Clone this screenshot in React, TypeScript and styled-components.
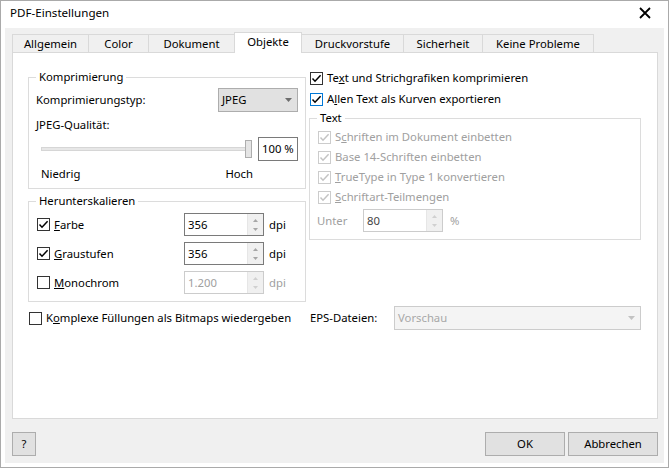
import React from 'react';
import styled, { createGlobalStyle } from 'styled-components';

const FONT = `"Noto Sans", "Open Sans", sans-serif`;

const GlobalStyle = createGlobalStyle`
  html, body { margin: 0; padding: 0; background: #fff; }
  body { font-family: ${FONT}; font-size: 11.3px; line-height: 16px; color: #000; }
  * { box-sizing: border-box; }
`;

const Window = styled.div`
  width: 669px;
  height: 468px;
  border: 1px solid #aaaaaa;
  background: #fff;
  display: flex;
  flex-direction: column;
`;

const TitleBar = styled.div`
  flex: none;
  height: 27px;
  display: flex;
  align-items: center;
  justify-content: space-between;
  padding: 0 17px 3px 9px;
  font-size: 11.6px;
`;

const Client = styled.div`
  flex: 1;
  margin: 0 4px 4px;
  background: #f0f0f0;
  padding: 4px 6px 7px 7px;
  display: flex;
  flex-direction: column;
`;

const TabRow = styled.div`
  flex: none;
  height: 21px;
  display: flex;
  align-items: flex-end;
  position: relative;
  z-index: 1;
`;

const Tab = styled.div<{ $active?: boolean; $w: number; $first?: boolean }>`
  width: ${(p) => p.$w + (p.$active ? 1 : 0)}px;
  height: ${(p) => (p.$active ? 21 : 18)}px;
  margin-bottom: ${(p) => (p.$active ? 0 : 1)}px;
  margin-left: ${(p) => (p.$active ? -1 : 0)}px;
  border-top: 1px solid #d9d9d9;
  border-right: 1px solid #d9d9d9;
  border-left: ${(p) => (p.$active || p.$first ? '1px solid #d9d9d9' : 'none')};
  background: ${(p) => (p.$active ? '#fff' : '#f0f0f0')};
  display: flex;
  align-items: center;
  justify-content: center;
  padding-bottom: ${(p) => (p.$active ? 2 : 0)}px;
  white-space: nowrap;
`;

const Panel = styled.div`
  flex: 1;
  margin-top: -1px;
  background: #fff;
  border: 1px solid #d9d9d9;
  padding: 16px 0 0 15px;
`;

const Columns = styled.div`
  display: grid;
  grid-template-columns: 278px 332px;
  column-gap: 3px;
`;

const Column = styled.div`
  display: flex;
  flex-direction: column;
`;

const Group = styled.fieldset<{ $top?: number; $pt: number; $pb: number }>`
  margin: ${(p) => p.$top ?? 0}px 0 0 0;
  min-width: 0;
  border: 1px solid #dcdcdc;
  padding: ${(p) => p.$pt}px 7px ${(p) => p.$pb}px 7px;
  display: flex;
  flex-direction: column;
`;

const Legend = styled.legend`
  padding: 0 3px;
  line-height: 16px;
`;

const Row = styled.div<{ $top?: number; $h?: number }>`
  display: flex;
  align-items: center;
  height: ${(p) => p.$h ?? 16}px;
  margin-top: ${(p) => p.$top ?? 0}px;
`;

const SpreadRow = styled(Row)`
  justify-content: space-between;
`;

const Label = styled.span<{ $dim?: boolean }>`
  color: ${(p) => (p.$dim ? '#a0a0a0' : '#000')};
  white-space: nowrap;
`;

const DropDown = styled.div<{ $w?: number; $disabled?: boolean }>`
  width: ${(p) => (p.$w ? `${p.$w}px` : 'auto')};
  flex: ${(p) => (p.$w ? 'none' : '1')};
  height: 24px;
  border: 1px solid ${(p) => (p.$disabled ? '#cccccc' : '#adadad')};
  background: ${(p) => (p.$disabled ? '#f4f4f4' : '#e1e1e1')};
  color: ${(p) => (p.$disabled ? '#a8a8a8' : '#000')};
  display: flex;
  align-items: center;
  justify-content: space-between;
  padding: 0 5px 0 3px;
`;

const SliderArea = styled.div`
  margin-left: 5px;
  display: flex;
  align-items: center;
`;

const Track = styled.div`
  width: 206px;
  height: 4px;
  border: 1px solid #d6d6d6;
  background: #e7e7e7;
`;

const Thumb = styled.div`
  width: 7px;
  height: 18px;
  margin-left: -2px;
  border: 1px solid #adadad;
  background: #e5e5e5;
`;

const TextBox = styled.div`
  margin-left: auto;
  width: 40px;
  height: 24px;
  border: 1px solid #7a7a7a;
  display: flex;
  align-items: center;
  padding-left: 3px;
`;

const ScaleLabels = styled(SpreadRow)`
  width: 212px;
  margin-left: 5px;
`;

const FieldRow = styled.div<{ $top?: number; $cols?: string }>`
  display: grid;
  grid-template-columns: ${(p) => p.$cols ?? '148px 80px auto'};
  align-items: center;
  height: 23px;
  margin-top: ${(p) => p.$top ?? 0}px;
`;

const UnitLabel = styled(Label)<{ $gap?: number }>`
  margin-left: ${(p) => p.$gap ?? 5}px;
`;

const SpinFrame = styled.div<{ $disabled?: boolean }>`
  width: 80px;
  height: 23px;
  border: 1px solid ${(p) => (p.$disabled ? '#cccccc' : '#7a7a7a')};
  background: #fff;
  display: flex;
`;

const SpinValue = styled.div<{ $color: string }>`
  flex: 1;
  display: flex;
  align-items: center;
  padding-left: 3px;
  color: ${(p) => p.$color};
`;

const SpinButtons = styled.div`
  width: 16px;
  border-left: 1px solid #e6e6e6;
  background: #f0f0f0;
  display: flex;
  flex-direction: column;
  align-items: center;
  justify-content: space-between;
  padding: 5px 0 4px;
`;

const CheckLine = styled.label<{ $h?: number; $top?: number }>`
  display: flex;
  align-items: center;
  height: ${(p) => p.$h ?? 18}px;
  margin-top: ${(p) => p.$top ?? 0}px;
  gap: 4px;
`;

const Box = styled.span<{ $state: 'on' | 'focus' | 'off' }>`
  flex: none;
  width: 13px;
  height: 13px;
  margin-left: 1px;
  border: 1px solid
    ${(p) => (p.$state === 'focus' ? '#0078d7' : p.$state === 'off' ? '#cccccc' : '#333333')};
  background: #fff;
  display: flex;
  align-items: center;
  justify-content: center;
`;

const BottomRow = styled.div`
  display: grid;
  grid-template-columns: 278px 332px;
  column-gap: 3px;
  height: 24px;
  margin-top: 4px;
  align-items: center;
`;

const EpsCell = styled.div`
  display: flex;
  align-items: center;
  height: 24px;
`;

const EpsLabel = styled.span`
  width: 85px;
  padding-left: 1px;
  white-space: nowrap;
`;

const ButtonRow = styled.div`
  flex: none;
  margin-top: 13px;
  display: flex;
  gap: 3px;
`;

const Button = styled.div<{ $w: number; $push?: boolean }>`
  width: ${(p) => p.$w}px;
  height: 24px;
  margin-left: ${(p) => (p.$push ? 'auto' : '0')};
  border: 1px solid #adadad;
  background: #e1e1e1;
  display: flex;
  align-items: center;
  justify-content: center;
`;

const Caret = ({ color }: { color: string }) => (
  <svg width="7" height="4" viewBox="0 0 7 4">
    <path d="M0 0h7L3.5 4z" fill={color} />
  </svg>
);

const SpinArrow = ({ up, color }: { up?: boolean; color: string }) => (
  <svg width="5" height="3" viewBox="0 0 5 3">
    <path d={up ? 'M0 3h5L2.5 0z' : 'M0 0h5L2.5 3z'} fill={color} />
  </svg>
);

const SpinBox = ({
  value,
  disabled,
  color,
}: {
  value: string;
  disabled?: boolean;
  color?: string;
}) => (
  <SpinFrame $disabled={disabled}>
    <SpinValue $color={color ?? (disabled ? '#a0a0a0' : '#000')}>{value}</SpinValue>
    <SpinButtons>
      <SpinArrow up color={disabled ? '#d0d0d0' : '#a6a6a6'} />
      <SpinArrow color={disabled ? '#d0d0d0' : '#a6a6a6'} />
    </SpinButtons>
  </SpinFrame>
);

const Check = ({
  state,
  checked = true,
  children,
  h,
  top,
}: {
  state: 'on' | 'focus' | 'off';
  checked?: boolean;
  children: React.ReactNode;
  h?: number;
  top?: number;
}) => (
  <CheckLine $h={h} $top={top}>
    <Box $state={state}>
      {checked && (
        <svg width="11" height="11" viewBox="0 0 11 11">
          <polyline
            points="1.5,5.6 4,8.2 9.6,2.2"
            fill="none"
            stroke={state === 'off' ? '#c4c4c4' : '#000'}
            strokeWidth="1.5"
          />
        </svg>
      )}
    </Box>
    <Label $dim={state === 'off'}>{children}</Label>
  </CheckLine>
);

const tabs = [
  { name: 'Allgemein', w: 77 },
  { name: 'Color', w: 60 },
  { name: 'Dokument', w: 86 },
  { name: 'Objekte', w: 67 },
  { name: 'Druckvorstufe', w: 102 },
  { name: 'Sicherheit', w: 79 },
  { name: 'Keine Probleme', w: 111 },
];

export default function App() {
  return (
    <>
      <GlobalStyle />
      <Window>
        <TitleBar>
          <span>PDF-Einstellungen</span>
          <svg width="12" height="12" viewBox="0 0 12 12">
            <path d="M1 1L11 11M11 1L1 11" stroke="#000" strokeWidth="1.8" />
          </svg>
        </TitleBar>
        <Client>
          <TabRow>
            {tabs.map((t, i) => (
              <Tab key={t.name} $w={t.w} $first={i === 0} $active={t.name === 'Objekte'}>
                {t.name}
              </Tab>
            ))}
          </TabRow>
          <Panel>
            <Columns>
              <Column>
                <Group $pt={3} $pb={6}>
                  <Legend>Komprimierung</Legend>
                  <SpreadRow $h={24}>
                    <Label>Komprimierungstyp:</Label>
                    <DropDown $w={80}>
                      <span>JPEG</span>
                      <Caret color="#6d6d6d" />
                    </DropDown>
                  </SpreadRow>
                  <Row $top={5}>
                    <Label>JPEG-Qualität:</Label>
                  </Row>
                  <Row $top={4} $h={24}>
                    <SliderArea>
                      <Track />
                      <Thumb />
                    </SliderArea>
                    <TextBox>100 %</TextBox>
                  </Row>
                  <ScaleLabels $top={5}>
                    <Label>Niedrig</Label>
                    <Label>Hoch</Label>
                  </ScaleLabels>
                </Group>
                <Group $top={4} $pt={4} $pb={7}>
                  <Legend>Herunterskalieren</Legend>
                  <FieldRow>
                    <Check state="on" h={23}>
                      <u>F</u>arbe
                    </Check>
                    <SpinBox value="356" />
                    <UnitLabel>dpi</UnitLabel>
                  </FieldRow>
                  <FieldRow $top={6}>
                    <Check state="on" h={23}>
                      <u>G</u>raustufen
                    </Check>
                    <SpinBox value="356" />
                    <UnitLabel>dpi</UnitLabel>
                  </FieldRow>
                  <FieldRow $top={6}>
                    <Check state="on" checked={false} h={23}>
                      <u>M</u>onochrom
                    </Check>
                    <SpinBox value="1.200" disabled />
                    <UnitLabel $dim>dpi</UnitLabel>
                  </FieldRow>
                </Group>
              </Column>
              <Column>
                <Check state="on">
                  Te<u>x</u>t und Strichgrafiken komprimieren
                </Check>
                <Check state="focus" top={3}>
                  A<u>l</u>len Text als Kurven exportieren
                </Check>
                <Group $top={2} $pt={1} $pb={7}>
                  <Legend>Text</Legend>
                  <Check state="off" h={20}>
                    S<u>c</u>hriften im Dokument einbetten
                  </Check>
                  <Check state="off" h={20}>
                    Base 14-Schriften einbetten
                  </Check>
                  <Check state="off" h={20}>
                    <u>T</u>rueType in Type 1 konvertieren
                  </Check>
                  <Check state="off" h={20}>
                    <u>S</u>chriftart-Teilmengen
                  </Check>
                  <FieldRow $top={2} $cols="46px 80px auto">
                    <Label $dim>Unter</Label>
                    <SpinBox value="80" disabled color="#444" />
                    <UnitLabel $dim $gap={7}>
                      %
                    </UnitLabel>
                  </FieldRow>
                </Group>
              </Column>
            </Columns>
            <BottomRow>
              <Check state="on" checked={false} h={24}>
                K<u>o</u>mplexe Füllungen als Bitmaps wiedergeben
              </Check>
              <EpsCell>
                <EpsLabel>EPS-Dateien:</EpsLabel>
                <DropDown $disabled>
                  <span>Vorschau</span>
                  <Caret color="#c2c2c2" />
                </DropDown>
              </EpsCell>
            </BottomRow>
          </Panel>
          <ButtonRow>
            <Button $w={24}>?</Button>
            <Button $w={80} $push>
              OK
            </Button>
            <Button $w={90}>Abbrechen</Button>
          </ButtonRow>
        </Client>
      </Window>
    </>
  );
}
